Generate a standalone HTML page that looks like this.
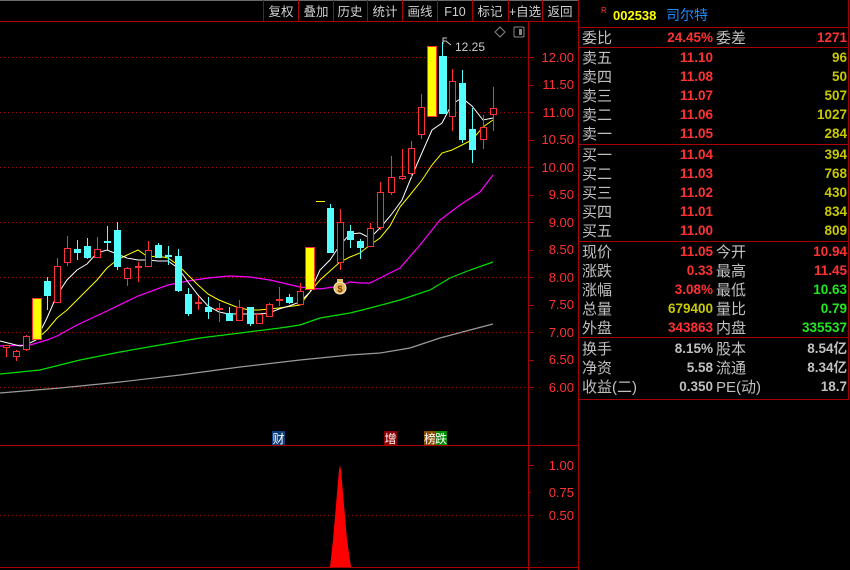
<!DOCTYPE html>
<html><head><meta charset="utf-8"><style>
html,body{margin:0;padding:0;background:#000;width:850px;height:570px;overflow:hidden}
svg{display:block}
text{font-family:"Liberation Sans","Noto Sans CJK SC",sans-serif}
</style></head><body>
<svg width="850" height="570" viewBox="0 0 850 570" xmlns="http://www.w3.org/2000/svg">
<rect width="850" height="570" fill="#000"/>
<line x1="0" y1="0.5" x2="578" y2="0.5" stroke="#6a6a6a"/>
<line x1="0" y1="21.5" x2="578" y2="21.5" stroke="#a00"/>
<g stroke="#a00">
<line x1="263.5" y1="0" x2="263.5" y2="21"/><line x1="298.5" y1="0" x2="298.5" y2="21"/><line x1="333.5" y1="0" x2="333.5" y2="21"/><line x1="367.5" y1="0" x2="367.5" y2="21"/><line x1="402.5" y1="0" x2="402.5" y2="21"/><line x1="437.5" y1="0" x2="437.5" y2="21"/><line x1="472.5" y1="0" x2="472.5" y2="21"/><line x1="508.5" y1="0" x2="508.5" y2="21"/><line x1="542.5" y1="0" x2="542.5" y2="21"/>
</g>
<g fill="#d0d0d0" font-size="12.5" text-anchor="middle">
<text x="281" y="16">复权</text><text x="316" y="16">叠加</text><text x="350" y="16">历史</text><text x="385" y="16">统计</text><text x="420" y="16">画线</text><text x="455" y="16">F10</text><text x="490" y="16">标记</text><text x="525" y="16">+自选</text><text x="560" y="16">返回</text>
</g>
<line x1="528.5" y1="21" x2="528.5" y2="570" stroke="#a00"/>
<line x1="0" y1="445.5" x2="578" y2="445.5" stroke="#a00"/>
<line x1="0" y1="567.5" x2="578" y2="567.5" stroke="#a00"/>
<line x1="578.5" y1="0" x2="578.5" y2="570" stroke="#a00"/>
<g stroke="#a00" stroke-dasharray="1,3">
<line x1="0" y1="57.5" x2="528" y2="57.5"/><line x1="0" y1="112.5" x2="528" y2="112.5"/><line x1="0" y1="167.5" x2="528" y2="167.5"/><line x1="0" y1="222.5" x2="528" y2="222.5"/><line x1="0" y1="277.5" x2="528" y2="277.5"/><line x1="0" y1="332.5" x2="528" y2="332.5"/><line x1="0" y1="387.5" x2="528" y2="387.5"/><line x1="0" y1="515.5" x2="528" y2="515.5"/>
</g>
<g fill="#ff3232" font-size="13" text-anchor="end">
<text x="574" y="62">12.00</text><text x="574" y="89">11.50</text><text x="574" y="117">11.00</text><text x="574" y="144">10.50</text><text x="574" y="172">10.00</text><text x="574" y="199">9.50</text><text x="574" y="227">9.00</text><text x="574" y="254">8.50</text><text x="574" y="282">8.00</text><text x="574" y="309">7.50</text><text x="574" y="337">7.00</text><text x="574" y="364">6.50</text><text x="574" y="392">6.00</text>
<text x="574" y="470">1.00</text><text x="574" y="497">0.75</text><text x="574" y="520">0.50</text>
</g>
<g stroke="#a00"><line x1="528" y1="57.5" x2="534" y2="57.5"/><line x1="528" y1="85.5" x2="534" y2="85.5"/><line x1="528" y1="112.5" x2="534" y2="112.5"/><line x1="528" y1="140.5" x2="534" y2="140.5"/><line x1="528" y1="167.5" x2="534" y2="167.5"/><line x1="528" y1="195.5" x2="534" y2="195.5"/><line x1="528" y1="222.5" x2="534" y2="222.5"/><line x1="528" y1="250.5" x2="534" y2="250.5"/><line x1="528" y1="277.5" x2="534" y2="277.5"/><line x1="528" y1="305.5" x2="534" y2="305.5"/><line x1="528" y1="332.5" x2="534" y2="332.5"/><line x1="528" y1="360.5" x2="534" y2="360.5"/><line x1="528" y1="387.5" x2="534" y2="387.5"/><line x1="528" y1="465.5" x2="534" y2="465.5"/><line x1="528" y1="492.5" x2="531" y2="492.5"/><line x1="528" y1="515.5" x2="534" y2="515.5"/></g>
<path d="M500 27 L505 32 L500 37 L495 32 Z" fill="none" stroke="#888"/>
<rect x="514" y="27" width="10" height="10" fill="none" stroke="#888" rx="1"/><rect x="519" y="29" width="3" height="6" fill="#888"/>
<polyline fill="none" stroke="#9a9a9a" stroke-width="1.2" points="0,393 60,388 120,382 180,375 240,367 300,360 350,355 380,353 410,348 440,338 470,330 493,324"/>
<polyline fill="none" stroke="#00e000" stroke-width="1.2" points="0,374 40,370 80,360 120,352 160,345 200,338 240,333 280,328 300,325 320,318 350,313 370,308 400,300 430,290 450,278 470,270 493,262"/>
<polyline fill="none" stroke="#ff00ff" stroke-width="1.2" points="0,346 30,345 47,340 57,336 77,325 107,311 138,296 168,285 188,281 208,278 229,276 250,277 270,280 300,287 320,289 340,286 350,282 360,283 370,283 380,278 400,268 420,245 440,220 460,205 480,192 493,175"/>
<polyline fill="none" stroke="#ffff00" stroke-width="1" points="36,340 47,330 57,318 67,310 77,300 87,290 97,280 107,268 117,260 127,255 138,250 148,257 158,256 168,258 178,265 188,275 198,285 208,294 219,300 229,304 239,308 250,310 259,310 269,309 279,308 300,305 310,292 320,280 330,271 340,262 350,257 360,253 370,245 380,238 390,226 400,207 410,195 422,180 432,165 442,153 452,150 462,145 472,140 483,127 493,120"/>
<polyline fill="none" stroke="#ffffff" stroke-width="1" points="0,341 20,346 26,345 36,340 47,318 57,295 67,280 77,270 87,264 97,253 107,250 117,254 127,258 138,260 148,260 158,261 168,261 178,268 188,282 198,295 208,306 219,312 229,314 239,314 250,314 259,314 269,313 279,309 289,306 300,302 310,292 320,270 330,260 340,245 350,234 360,233 370,238 380,228 391,215 402,200 411,178 421,155 432,130 442,123 452,104 462,98 472,106 483,120 493,118"/>
<g stroke-width="1">
<g fill="#000" stroke="#ff3232">
<line x1="6.5" y1="345" x2="6.5" y2="357"/><rect x="3.5" y="345.5" width="6" height="2"/>
<line x1="16.5" y1="350" x2="16.5" y2="361"/><rect x="13.5" y="351.5" width="6" height="5"/>
<line x1="26.5" y1="335" x2="26.5" y2="351"/><rect x="23.5" y="336.5" width="6" height="13"/>
<line x1="57.5" y1="258" x2="57.5" y2="302"/><rect x="54.5" y="266.5" width="6" height="36"/>
<line x1="67.5" y1="236" x2="67.5" y2="266"/><rect x="64.5" y="248.5" width="6" height="14"/>
<line x1="97.5" y1="237" x2="97.5" y2="257"/><rect x="94.5" y="249.5" width="6" height="8"/>
<line x1="127.5" y1="267" x2="127.5" y2="286"/><rect x="124.5" y="268.5" width="6" height="10"/>
<line x1="138.5" y1="262" x2="138.5" y2="282"/><rect x="135.5" y="266.5" width="6" height="1"/>
<line x1="148.5" y1="241" x2="148.5" y2="266"/><rect x="145.5" y="250.5" width="6" height="16"/>
<line x1="198.5" y1="296" x2="198.5" y2="310"/><rect x="195.5" y="302.5" width="6" height="1"/>
<line x1="219.5" y1="303" x2="219.5" y2="322"/><rect x="216.5" y="308.5" width="6" height="1"/>
<line x1="239.5" y1="300" x2="239.5" y2="321"/><rect x="236.5" y="307.5" width="6" height="13"/>
<line x1="259.5" y1="314" x2="259.5" y2="324"/><rect x="256.5" y="314.5" width="6" height="9"/>
<line x1="269.5" y1="303" x2="269.5" y2="317"/><rect x="266.5" y="304.5" width="6" height="12"/>
<line x1="279.5" y1="287" x2="279.5" y2="306"/><rect x="276.5" y="299.5" width="6" height="1"/>
<line x1="300.5" y1="283" x2="300.5" y2="304"/><rect x="297.5" y="291.5" width="6" height="13"/>
<line x1="340.5" y1="209" x2="340.5" y2="270"/><rect x="337.5" y="222.5" width="6" height="40"/>
<line x1="370.5" y1="223" x2="370.5" y2="246"/><rect x="367.5" y="228.5" width="6" height="18"/>
<line x1="380.5" y1="182" x2="380.5" y2="230"/><rect x="377.5" y="192.5" width="6" height="35"/>
<line x1="391.5" y1="156" x2="391.5" y2="195"/><rect x="388.5" y="177.5" width="6" height="15"/>
<line x1="402.5" y1="149" x2="402.5" y2="180"/><rect x="399.5" y="176.5" width="6" height="2"/>
<line x1="411.5" y1="141" x2="411.5" y2="177"/><rect x="408.5" y="148.5" width="6" height="25"/>
<line x1="421.5" y1="94" x2="421.5" y2="139"/><rect x="418.5" y="107.5" width="6" height="27"/>
<line x1="452.5" y1="69" x2="452.5" y2="131"/><rect x="449.5" y="81.5" width="6" height="35"/>
<line x1="483.5" y1="115" x2="483.5" y2="149"/><rect x="480.5" y="127.5" width="6" height="12"/>
<line x1="493.5" y1="87" x2="493.5" y2="131"/><rect x="490.5" y="108.5" width="6" height="6"/>
</g>
<g fill="#54ffff" stroke="#54ffff">
<line x1="47.5" y1="277" x2="47.5" y2="310"/><rect x="44.5" y="281.5" width="6" height="14"/>
<line x1="77.5" y1="240" x2="77.5" y2="260"/><rect x="74.5" y="249.5" width="6" height="3"/>
<line x1="87.5" y1="238" x2="87.5" y2="259"/><rect x="84.5" y="246.5" width="6" height="11"/>
<line x1="107.5" y1="226" x2="107.5" y2="250"/><rect x="104.5" y="241.5" width="6" height="1"/>
<line x1="117.5" y1="222" x2="117.5" y2="270"/><rect x="114.5" y="230.5" width="6" height="36"/>
<line x1="158.5" y1="243" x2="158.5" y2="258"/><rect x="155.5" y="245.5" width="6" height="12"/>
<line x1="168.5" y1="246" x2="168.5" y2="265"/><rect x="165.5" y="255.5" width="6" height="1"/>
<line x1="178.5" y1="249" x2="178.5" y2="292"/><rect x="175.5" y="256.5" width="6" height="34"/>
<line x1="188.5" y1="288" x2="188.5" y2="316"/><rect x="185.5" y="294.5" width="6" height="19"/>
<line x1="208.5" y1="297" x2="208.5" y2="319"/><rect x="205.5" y="307.5" width="6" height="4"/>
<line x1="229.5" y1="307" x2="229.5" y2="321"/><rect x="226.5" y="313.5" width="6" height="7"/>
<line x1="250.5" y1="307" x2="250.5" y2="326"/><rect x="247.5" y="307.5" width="6" height="16"/>
<line x1="289.5" y1="294" x2="289.5" y2="304"/><rect x="286.5" y="297.5" width="6" height="5"/>
<line x1="330.5" y1="204" x2="330.5" y2="252"/><rect x="327.5" y="208.5" width="6" height="44"/>
<line x1="350.5" y1="225" x2="350.5" y2="248"/><rect x="347.5" y="231.5" width="6" height="8"/>
<line x1="360.5" y1="239" x2="360.5" y2="259"/><rect x="357.5" y="241.5" width="6" height="6"/>
<line x1="442.5" y1="42" x2="442.5" y2="113"/><rect x="439.5" y="56.5" width="7" height="57"/>
<line x1="462.5" y1="70" x2="462.5" y2="143"/><rect x="459.5" y="83.5" width="6" height="56"/>
<line x1="472.5" y1="108" x2="472.5" y2="163"/><rect x="469.5" y="129.5" width="6" height="20"/>
</g>
<g fill="#ffff00" stroke="#ff3232">
<rect x="32.5" y="298.5" width="9" height="41"/>
<rect x="305.5" y="247.5" width="9" height="42"/>
<rect x="427.5" y="46.5" width="9" height="70"/>
</g>
<line x1="316" y1="201.5" x2="325" y2="201.5" stroke="#ffff00"/>
</g>
<path d="M443 44 L443 38 L447 38 M443 41 L446 41 L451 45" fill="none" stroke="#ccc"/>
<text x="455" y="51" fill="#ccc" font-size="12">12.25</text>
<ellipse cx="340" cy="288" rx="6" ry="6" fill="#e8b860" stroke="#fff3c0"/>
<rect x="337" y="279" width="6" height="3" fill="#e8c060"/>
<text x="340" y="292" fill="#7a3a00" font-size="9" text-anchor="middle" font-weight="bold">$</text>
<rect x="272" y="431" width="13" height="14" fill="#0d3d7a"/><text x="278.5" y="443" fill="#fff" font-size="12" text-anchor="middle">财</text>
<rect x="384" y="431" width="13" height="14" fill="#8a0000"/><text x="390.5" y="443" fill="#fff" font-size="12" text-anchor="middle">增</text>
<rect x="424" y="431" width="12" height="14" fill="#8a4a00"/><text x="430" y="443" fill="#fff" font-size="12" text-anchor="middle">榜</text>
<rect x="435" y="431" width="12" height="14" fill="#008a00"/><text x="441" y="443" fill="#fff" font-size="12" text-anchor="middle">跌</text>
<path d="M330 567 L333 540 L336 505 L339 470 L340 465 L341 470 L344 505 L347 540 L351 567 Z" fill="#ff0000"/>
<line x1="848.5" y1="0" x2="848.5" y2="400" stroke="#a00"/>
<g stroke="#a00"><line x1="578" y1="27.5" x2="849" y2="27.5"/><line x1="578" y1="47.5" x2="849" y2="47.5"/><line x1="578" y1="144.5" x2="849" y2="144.5"/><line x1="578" y1="241.5" x2="849" y2="241.5"/><line x1="578" y1="337.5" x2="849" y2="337.5"/><line x1="578" y1="399.5" x2="849" y2="399.5"/></g>
<text x="601" y="13" fill="#ff3232" font-size="8">R</text>
<text x="613" y="20" fill="#ffff00" font-size="13" font-weight="bold">002538</text>
<text x="666" y="20" fill="#1e8cff" font-size="14">司尔特</text>
<g font-size="15" fill="#c0c0c0">
<text x="582" y="43">委比</text><text x="716" y="43">委差</text>
<text x="582" y="63">卖五</text><text x="582" y="82">卖四</text><text x="582" y="101">卖三</text><text x="582" y="120">卖二</text><text x="582" y="139">卖一</text>
<text x="582" y="160">买一</text><text x="582" y="179">买二</text><text x="582" y="198">买三</text><text x="582" y="217">买四</text><text x="582" y="236">买五</text>
<text x="582" y="257">现价</text><text x="716" y="257">今开</text>
<text x="582" y="276">涨跌</text><text x="716" y="276">最高</text>
<text x="582" y="295">涨幅</text><text x="716" y="295">最低</text>
<text x="582" y="314">总量</text><text x="716" y="314">量比</text>
<text x="582" y="333">外盘</text><text x="716" y="333">内盘</text>
<text x="582" y="354">换手</text><text x="716" y="354">股本</text>
<text x="582" y="373">净资</text><text x="716" y="373">流通</text>
<text x="582" y="392">收益(二)</text><text x="716" y="392">PE(动)</text>
</g>
<g font-size="13.5" font-weight="bold" text-anchor="end">
<g fill="#ff3232">
<text x="713" y="42">24.45%</text><text x="847" y="42">1271</text>
<text x="713" y="62">11.10</text><text x="713" y="81">11.08</text><text x="713" y="100">11.07</text><text x="713" y="119">11.06</text><text x="713" y="138">11.05</text>
<text x="713" y="159">11.04</text><text x="713" y="178">11.03</text><text x="713" y="197">11.02</text><text x="713" y="216">11.01</text><text x="713" y="235">11.00</text>
<text x="713" y="256">11.05</text><text x="847" y="256">10.94</text>
<text x="713" y="275">0.33</text><text x="847" y="275">11.45</text>
<text x="713" y="294">3.08%</text>
<text x="713" y="332">343863</text>
</g>
<g fill="#c8c800">
<text x="847" y="62">96</text><text x="847" y="81">50</text><text x="847" y="100">507</text><text x="847" y="119">1027</text><text x="847" y="138">284</text>
<text x="847" y="159">394</text><text x="847" y="178">768</text><text x="847" y="197">430</text><text x="847" y="216">834</text><text x="847" y="235">809</text>
<text x="713" y="313">679400</text>
</g>
<g fill="#22e822">
<text x="847" y="294">10.63</text><text x="847" y="313">0.79</text><text x="847" y="332">335537</text>
</g>
<g fill="#c0c0c0">
<text x="713" y="353">8.15%</text><text x="847" y="353">8.54亿</text>
<text x="713" y="372">5.58</text><text x="847" y="372">8.34亿</text>
<text x="713" y="391">0.350</text><text x="847" y="391">18.7</text>
</g>
</g>
</svg>
</body></html>
